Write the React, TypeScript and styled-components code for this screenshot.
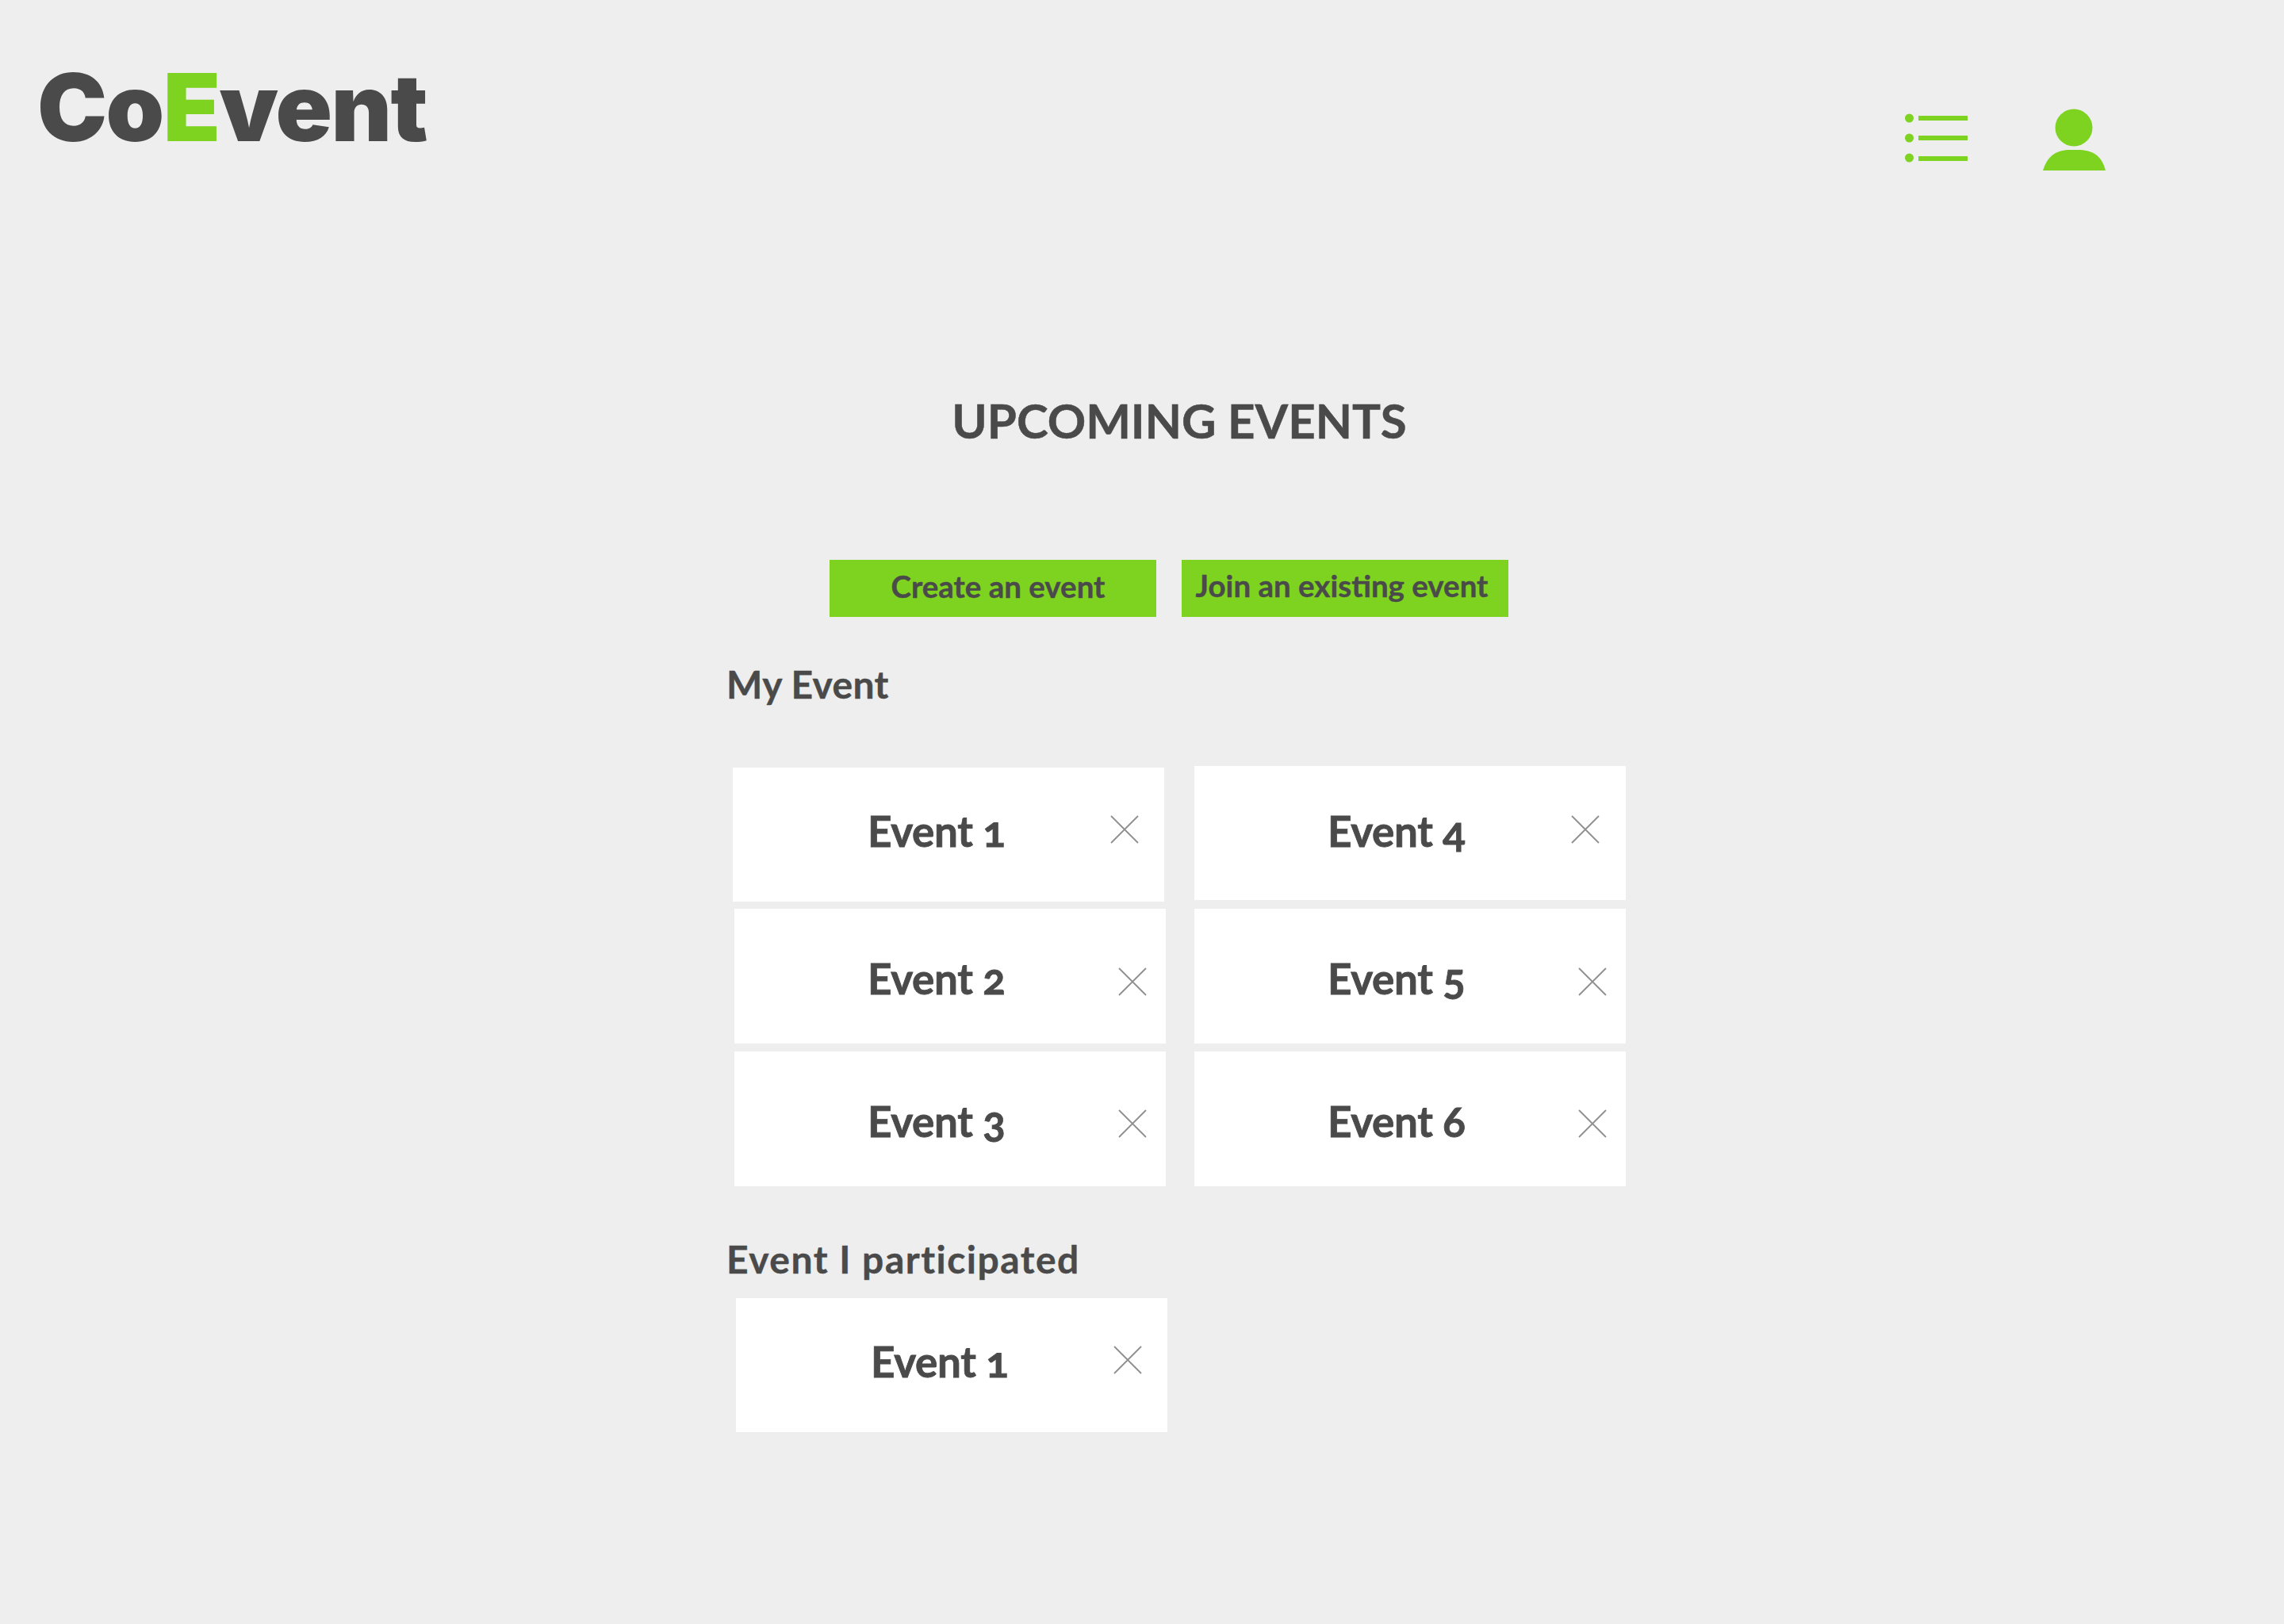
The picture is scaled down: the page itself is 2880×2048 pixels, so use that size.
import React from "react";
import styled, { createGlobalStyle } from "styled-components";

const Global = createGlobalStyle`
  html, body { margin: 0; padding: 0; background: #eeeeee; }
`;

const Page = styled.div`
  width: 2880px;
  height: 2048px;
  overflow: hidden;
  background: #eeeeee;
  color: #4a4a4a;
  font-family: "Lato", "Liberation Sans", sans-serif;
`;

const Header = styled.header`
  display: flex;
  align-items: flex-start;
  justify-content: space-between;
  height: 240px;
  padding: 0 222px 0 47px;
`;

const Logo = styled.div`
  margin-top: 65px;
  font-family: "Inter", "Lato", sans-serif;
  font-size: 118px;
  line-height: 140px;
  font-weight: 900;
  letter-spacing: -1.6px;
`;

const LogoAccent = styled.span`
  color: #7ed321;
`;

const Nav = styled.nav`
  display: flex;
  gap: 90px;
  margin-top: 136px;
`;

const Main = styled.main`
  width: 1142px;
  margin-left: 916px;
`;

const Title = styled.h1`
  margin: 260px 0 0;
  font-size: 60px;
  line-height: 60px;
  font-weight: 700;
  text-align: center;
  -webkit-text-stroke: 0.5px #4a4a4a;
`;

const Actions = styled.div`
  display: flex;
  gap: 32px;
  margin: 146px 0 0 130px;
`;

const ActionButton = styled.button<{ $lift: number; $pushLeft: number; $pushRight: number }>`
  width: 412px;
  height: 72px;
  padding: 0 ${(p) => p.$pushRight}px ${(p) => p.$lift}px ${(p) => p.$pushLeft}px;
  border: 0;
  background: #7ed321;
  color: #4a4a4a;
  font-family: inherit;
  font-size: 38.5px;
  font-weight: 700;
  -webkit-text-stroke: 0.4px #4a4a4a;
`;

const SectionTitle = styled.h2<{ $top: number; $spacing: number }>`
  margin: ${(p) => p.$top}px 0 0;
  font-size: 48px;
  line-height: 60px;
  font-weight: 700;
  letter-spacing: ${(p) => p.$spacing}px;
  -webkit-text-stroke: 0.4px #4a4a4a;
`;

const Grid = styled.div`
  display: grid;
  grid-template-columns: 590px 544px;
  margin-top: 73px;
`;

const Column = styled.div`
  display: flex;
  flex-direction: column;
`;

const Card = styled.div<{ $left: number; $top: number; $height: number }>`
  display: flex;
  align-items: flex-start;
  justify-content: space-between;
  box-sizing: border-box;
  width: 544px;
  height: ${(p) => p.$height}px;
  margin: ${(p) => p.$top}px 0 0 ${(p) => p.$left}px;
  background: #ffffff;
`;

const CardLabel = styled.span<{ $left: number; $top: number }>`
  margin: ${(p) => p.$top}px 0 0 ${(p) => p.$left}px;
  font-size: 53px;
  line-height: 60px;
  font-weight: 700;
  letter-spacing: -0.3px;
  font-feature-settings: "onum";
  -webkit-text-stroke: 0.8px #4a4a4a;
`;

const Close = styled.svg<{ $right: number; $top: number }>`
  flex: none;
  width: 36px;
  height: 36px;
  margin: ${(p) => p.$top}px ${(p) => p.$right}px 0 0;
  stroke: #8f8f8f;
  stroke-width: 1.8;
`;

const CloseIcon = ({ right, top }: { right: number; top: number }) => (
  <Close $right={right} $top={top} viewBox="0 0 36 36" aria-hidden>
    <path d="M1 1 L35 35 M35 1 L1 35" fill="none" />
  </Close>
);

type Ev = {
  name: string;
  left: number;
  top: number;
  height: number;
  textLeft: number;
  textTop: number;
  closeRight: number;
  closeTop: number;
};

const EventCard = ({ e }: { e: Ev }) => (
  <Card $left={e.left} $top={e.top} $height={e.height}>
    <CardLabel $left={e.textLeft} $top={e.textTop}>
      {e.name}
    </CardLabel>
    <CloseIcon right={e.closeRight} top={e.closeTop} />
  </Card>
);

const col1: Ev[] = [
  { name: "Event 1", left: 8, top: 2, height: 169, textLeft: 170, textTop: 50, closeRight: 32, closeTop: 60 },
  { name: "Event 2", left: 10, top: 9, height: 170, textLeft: 168, textTop: 58, closeRight: 24, closeTop: 74 },
  { name: "Event 3", left: 10, top: 10, height: 170, textLeft: 168, textTop: 58, closeRight: 24, closeTop: 73 },
];
const col2: Ev[] = [
  { name: "Event 4", left: 0, top: 0, height: 169, textLeft: 168, textTop: 52, closeRight: 33, closeTop: 62 },
  { name: "Event 5", left: 0, top: 11, height: 170, textLeft: 168, textTop: 58, closeRight: 24, closeTop: 74 },
  { name: "Event 6", left: 0, top: 10, height: 170, textLeft: 168, textTop: 58, closeRight: 24, closeTop: 73 },
];
const participated: Ev = {
  name: "Event 1", left: 12, top: 19, height: 169, textLeft: 170, textTop: 50, closeRight: 32, closeTop: 60,
};

export default function App() {
  return (
    <Page>
      <Global />
      <Header>
        <Logo>
          Co<LogoAccent>E</LogoAccent>vent
        </Logo>
        <Nav>
          <svg width="84" height="80" viewBox="0 0 84 80" aria-hidden>
            <g fill="#7ed321">
              <circle cx="7.5" cy="13" r="5.5" />
              <circle cx="7.5" cy="38" r="5.5" />
              <circle cx="7.5" cy="63" r="5.5" />
              <rect x="19" y="10" width="62" height="6" />
              <rect x="19" y="35" width="62" height="6" />
              <rect x="19" y="61" width="62" height="6" />
            </g>
          </svg>
          <svg width="84" height="80" viewBox="0 0 84 80" aria-hidden>
            <g fill="#7ed321">
              <circle cx="41" cy="25" r="23.5" />
              <path d="M2 79 C8 59 21 53 36 53 H46 C63 53 76 59 81 79 Z" />
            </g>
          </svg>
        </Nav>
      </Header>
      <Main>
        <Title>UPCOMING EVENTS</Title>
        <Actions>
          <ActionButton $lift={6} $pushLeft={13} $pushRight={0}>Create an event</ActionButton>
          <ActionButton $lift={8} $pushLeft={0} $pushRight={8}>Join an existing event</ActionButton>
        </Actions>
        <SectionTitle $top={55} $spacing={0.3}>My Event</SectionTitle>
        <Grid>
          <Column>
            {col1.map((e) => (
              <EventCard key={e.name} e={e} />
            ))}
          </Column>
          <Column>
            {col2.map((e) => (
              <EventCard key={e.name} e={e} />
            ))}
          </Column>
        </Grid>
        <SectionTitle $top={62} $spacing={1.5}>Event I participated</SectionTitle>
        <EventCard e={participated} />
      </Main>
    </Page>
  );
}
